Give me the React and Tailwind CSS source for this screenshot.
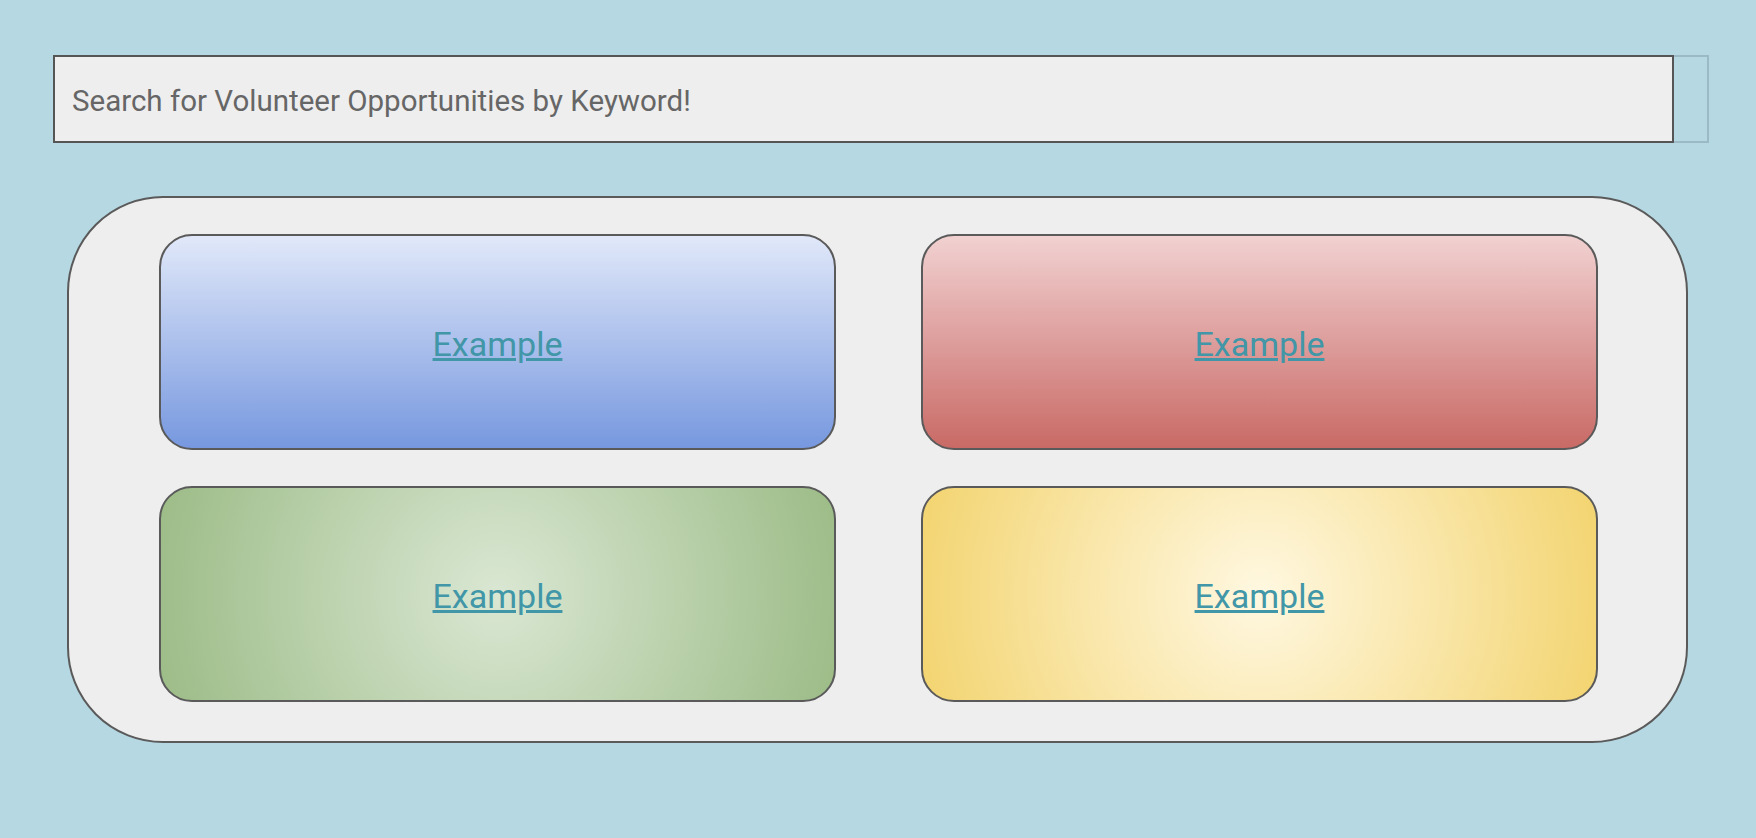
export default function App() {
  const cards = [
    { bg: "bg-[linear-gradient(to_bottom,#e1e8f9,#7798df)]" },
    { bg: "bg-[linear-gradient(to_bottom,#f1d1d1,#c96a66)]" },
    { bg: "bg-[radial-gradient(circle_at_center,#dae7d3_0%,#9cbc87_100%)]" },
    { bg: "bg-[radial-gradient(circle_at_center,#fff8e1_0%,#f3d470_100%)]" },
  ];

  return (
    <div className="h-screen w-full overflow-hidden bg-[#b6d8e3] pt-[55px] pl-[53px] font-['Roboto',sans-serif]">
      <form className="flex h-[88px]" onSubmit={(e) => e.preventDefault()}>
        <input
          type="text"
          placeholder="Search for Volunteer Opportunities by Keyword!"
          className="h-full w-[1621px] border-2 border-[#555555] bg-[#eeeeee] pt-[3px] pl-[17px] text-[29.5px] text-[#666666] placeholder:text-[#666666] outline-none"
        />
        <button
          type="submit"
          className="h-full w-[35px] border-2 border-l-0 border-[#9bbac6] bg-transparent"
        />
      </form>

      <div className="mt-[53px] ml-[14px] w-[1621px] rounded-[96px] border-2 border-[#5a5a5a] bg-[#eeeeee] pt-[36px] pb-[39px] pl-[90px]">
        <div className="grid grid-cols-[677px_677px] gap-x-[85px] gap-y-[36px]">
          {cards.map((c, i) => (
            <div
              key={i}
              className={`flex h-[216px] items-center justify-center rounded-[33px] border-2 border-[#5a5a5a] pt-[4px] ${c.bg}`}
            >
              <a href="#" className="text-[34px] text-[#4196a7] underline">
                Example
              </a>
            </div>
          ))}
        </div>
      </div>
    </div>
  );
}
